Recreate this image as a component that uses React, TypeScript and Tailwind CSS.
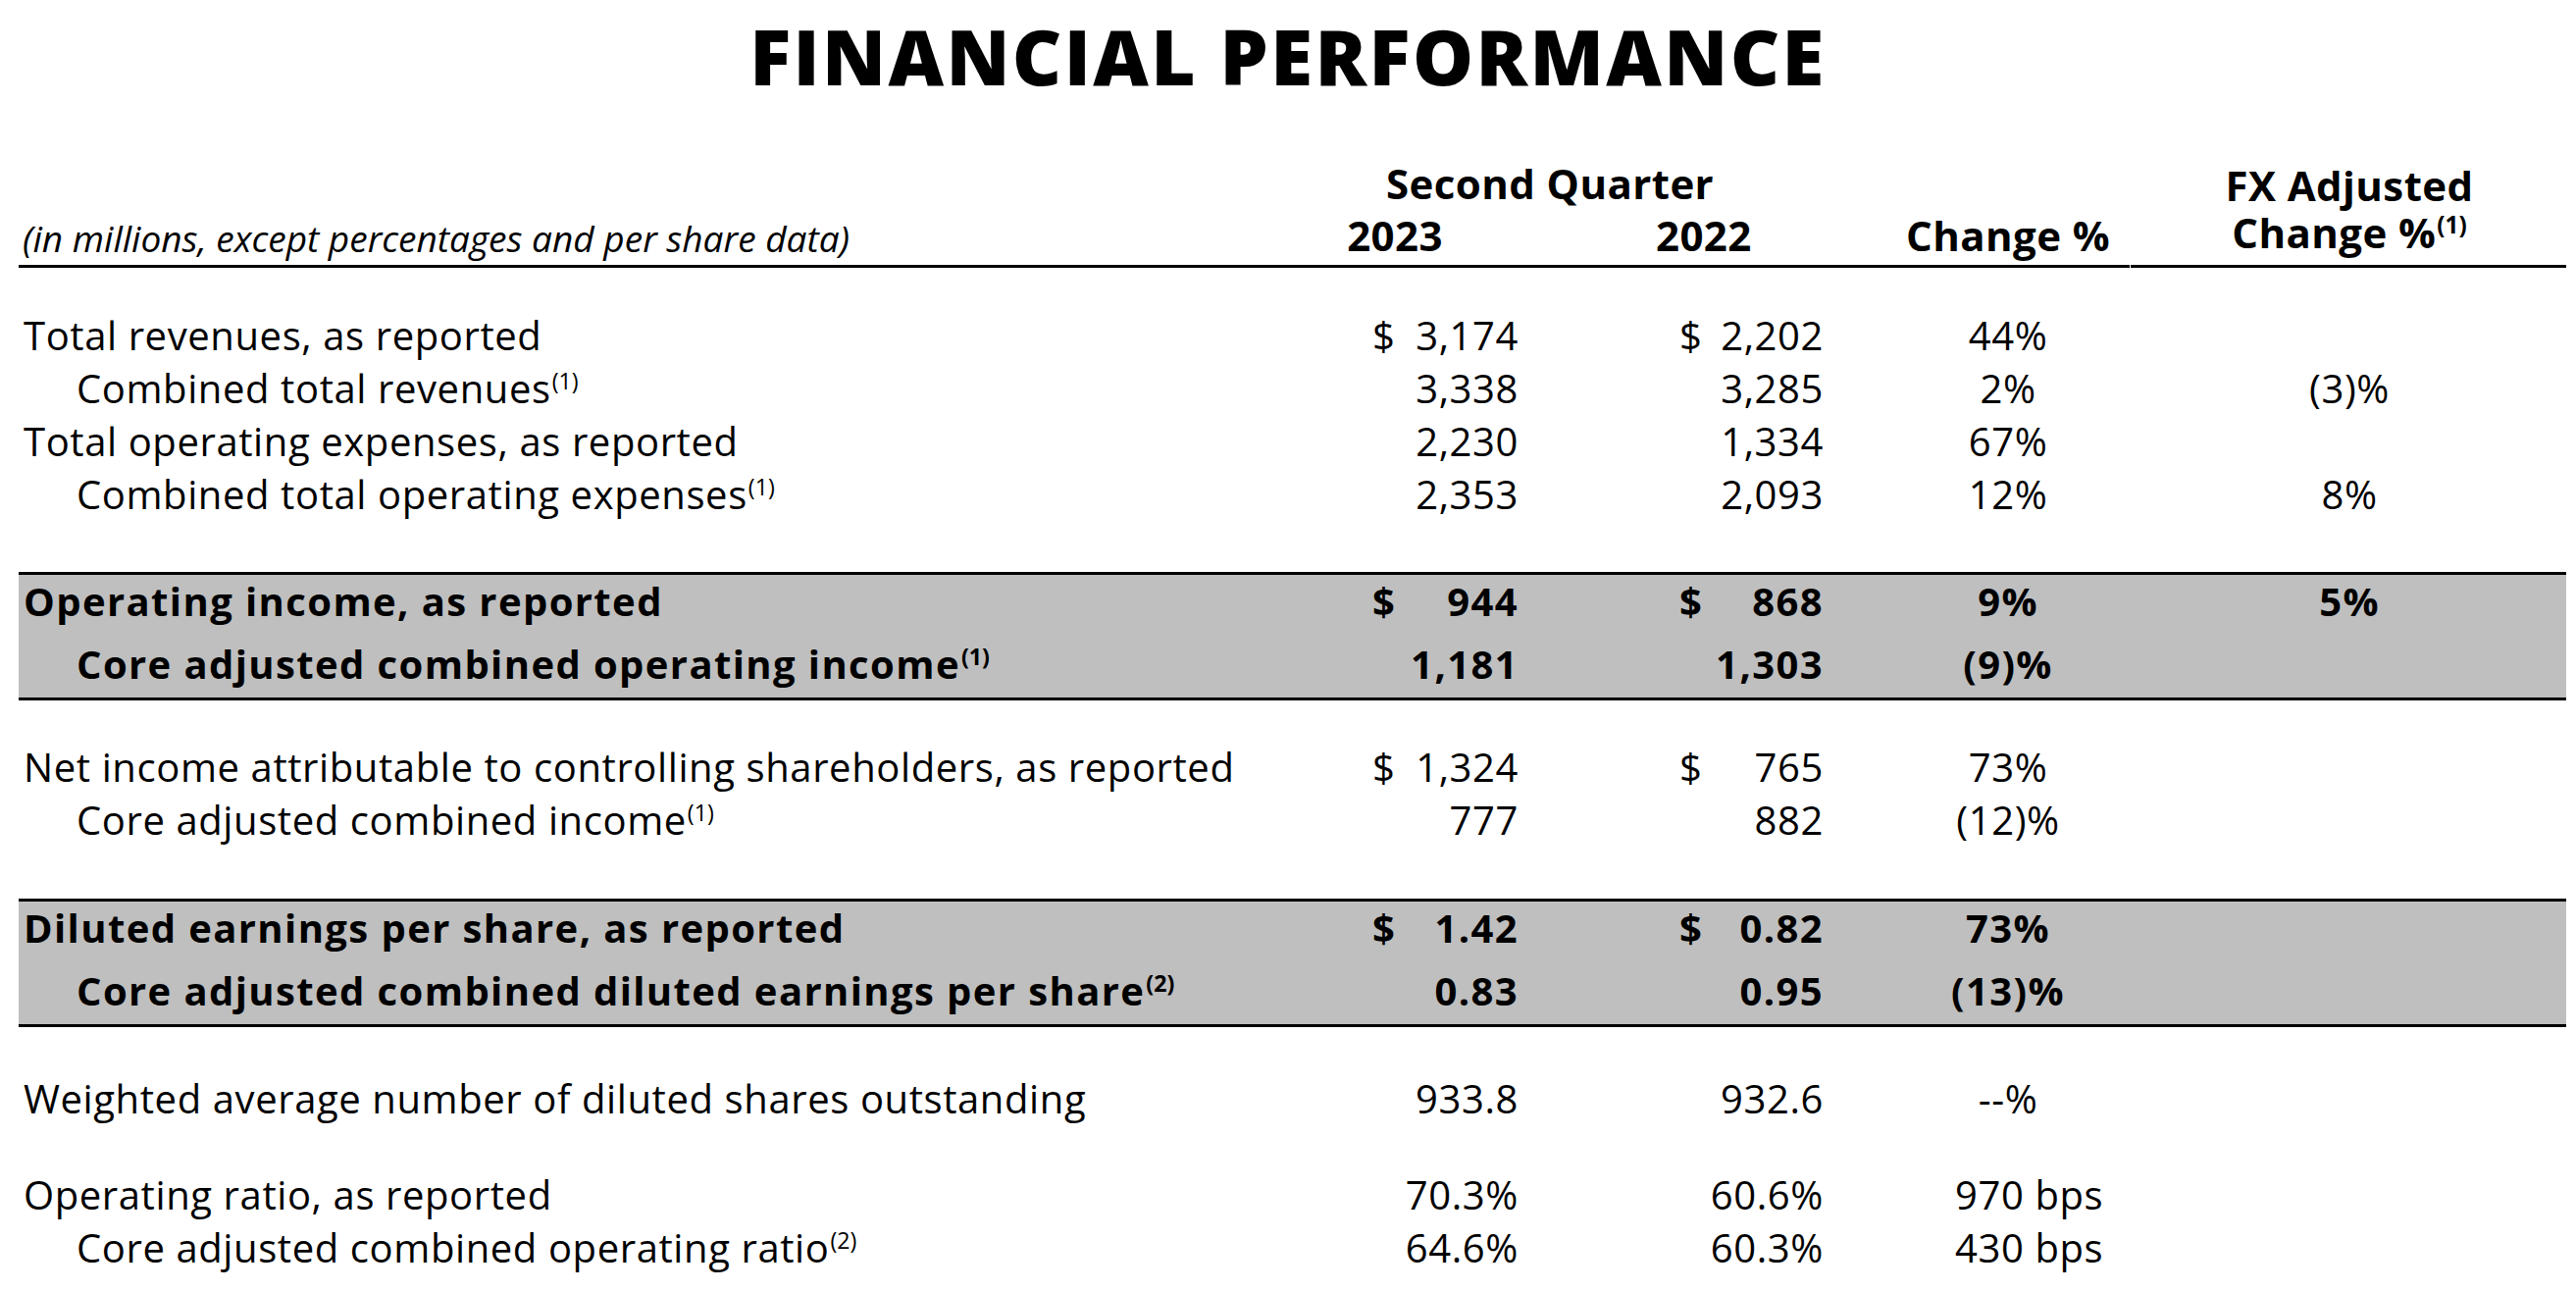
import React from "react";

type Row = {
  label: string;
  sup?: string;
  indent?: boolean;
  c1: string;
  c1d?: boolean;
  c2: string;
  c2d?: boolean;
  ch: string;
  chLeft?: boolean;
  fx?: string;
};

const GRID = "grid grid-cols-[1361px_180px_360px_254px_442px]";

function Sup({ children }: { children: React.ReactNode }) {
  return <sup className="text-[0.58em] top-[-0.62em] ml-[1px] tracking-normal">{children}</sup>;
}

function DataRow({ r, rowClass }: { r: Row; rowClass: string }) {
  return (
    <div className={`${GRID} ${rowClass}`}>
      <div className={`whitespace-nowrap ${r.indent ? "pl-[59px]" : "pl-[5px]"}`}>
        {r.label}
        {r.sup ? <Sup>{r.sup}</Sup> : null}
      </div>
      <div className="flex justify-between pl-[19px] pr-[12px]">
        <span>{r.c1d ? "$" : ""}</span>
        <span>{r.c1}</span>
      </div>
      <div className="flex justify-between pl-[152px] pr-[61px]">
        <span>{r.c2d ? "$" : ""}</span>
        <span>{r.c2}</span>
      </div>
      <div className={r.chLeft ? "text-left pl-[73px] whitespace-nowrap" : "text-center"}>{r.ch}</div>
      <div className="text-center">{r.fx ?? ""}</div>
    </div>
  );
}

const top4: Row[] = [
  { label: "Total revenues, as reported", c1: "3,174", c1d: true, c2: "2,202", c2d: true, ch: "44%" },
  { label: "Combined total revenues", sup: "(1)", indent: true, c1: "3,338", c2: "3,285", ch: "2%", fx: "(3)%" },
  { label: "Total operating expenses, as reported", c1: "2,230", c2: "1,334", ch: "67%" },
  { label: "Combined total operating expenses", sup: "(1)", indent: true, c1: "2,353", c2: "2,093", ch: "12%", fx: "8%" },
];

const band1: Row[] = [
  { label: "Operating income, as reported", c1: "944", c1d: true, c2: "868", c2d: true, ch: "9%", fx: "5%" },
  { label: "Core adjusted combined operating income", sup: "(1)", indent: true, c1: "1,181", c2: "1,303", ch: "(9)%" },
];

const mid: Row[] = [
  { label: "Net income attributable to controlling shareholders, as reported", c1: "1,324", c1d: true, c2: "765", c2d: true, ch: "73%" },
  { label: "Core adjusted combined income", sup: "(1)", indent: true, c1: "777", c2: "882", ch: "(12)%" },
];

const band2: Row[] = [
  { label: "Diluted earnings per share, as reported", c1: "1.42", c1d: true, c2: "0.82", c2d: true, ch: "73%" },
  { label: "Core adjusted combined diluted earnings per share", sup: "(2)", indent: true, c1: "0.83", c2: "0.95", ch: "(13)%" },
];

const weighted: Row = { label: "Weighted average number of diluted shares outstanding", c1: "933.8", c2: "932.6", ch: "--%" };

const ratios: Row[] = [
  { label: "Operating ratio, as reported", c1: "70.3%", c2: "60.6%", ch: "970 bps", chLeft: true },
  { label: "Core adjusted combined operating ratio", sup: "(2)", indent: true, c1: "64.6%", c2: "60.3%", ch: "430 bps", chLeft: true },
];

function Band({ rows }: { rows: Row[] }) {
  return (
    <div className="border-y-[3px] border-black bg-[#bfbfbf] font-bold tracking-[0.035em]">
      <DataRow r={rows[0]} rowClass="h-[50px] items-center" />
      <DataRow r={rows[1]} rowClass="h-[75px] items-start pt-[14px] leading-[54px]" />
    </div>
  );
}

export default function App() {
  return (
    <div className="min-h-screen bg-white text-black font-['Open_Sans','Noto_Sans',sans-serif]">
      <div className="h-[120px] pb-[6px] flex items-center justify-center">
        <h1 className="text-[78px] leading-none font-extrabold tracking-[0.03em]">FINANCIAL PERFORMANCE</h1>
      </div>
      <div className="pl-[19px] pr-[10px]">
        {/* header */}
        <div className={`${GRID} grid-rows-[53px_55px] pt-[40px] font-bold text-[42px] leading-[53px] tracking-[0.01em]`}>
          <div />
          <div className="col-span-2">
            <div className="ml-[33px] w-[326px] text-center whitespace-nowrap">Second Quarter</div>
          </div>
          <div />
          <div className="text-center whitespace-nowrap pt-[6px] leading-[46px]">FX Adjusted</div>

          <div className="pl-[4px] pt-[5px] font-normal italic text-[37px] leading-[50px] whitespace-nowrap tracking-normal">
            (in millions, except percentages and per share data)
          </div>
          <div>
            <div className="-ml-[7px] w-[98px] text-center">2023</div>
          </div>
          <div>
            <div className="ml-[128px] w-[96px] text-center">2022</div>
          </div>
          <div className="text-center whitespace-nowrap">Change %</div>
          <div className="text-center whitespace-nowrap leading-[46px] pt-[1px]">
            Change %<Sup>(1)</Sup>
          </div>
        </div>
        <div className="flex gap-[1px] mt-[2px]">
          <div className="w-[2152px] h-[3px] bg-black" />
          <div className="flex-1 h-[3px] bg-black" />
        </div>

        {/* body */}
        <div className="text-[40px] leading-[54px] tracking-[0.015em]">
          <div className="pt-[42px]">
            {top4.map((r) => (
              <DataRow key={r.label} r={r} rowClass="h-[54px] items-center" />
            ))}
          </div>
          <div className="mt-[52px]">
            <Band rows={band1} />
          </div>
          <div className="pt-[41px]">
            {mid.map((r) => (
              <DataRow key={r.label} r={r} rowClass="h-[54px] items-center" />
            ))}
          </div>
          <div className="mt-[53px]">
            <Band rows={band2} />
          </div>
          <div className="pt-[46px]">
            <DataRow r={weighted} rowClass="h-[54px] items-center" />
          </div>
          <div className="pt-[44px]">
            {ratios.map((r) => (
              <DataRow key={r.label} r={r} rowClass="h-[54px] items-center" />
            ))}
          </div>
        </div>
      </div>
    </div>
  );
}
